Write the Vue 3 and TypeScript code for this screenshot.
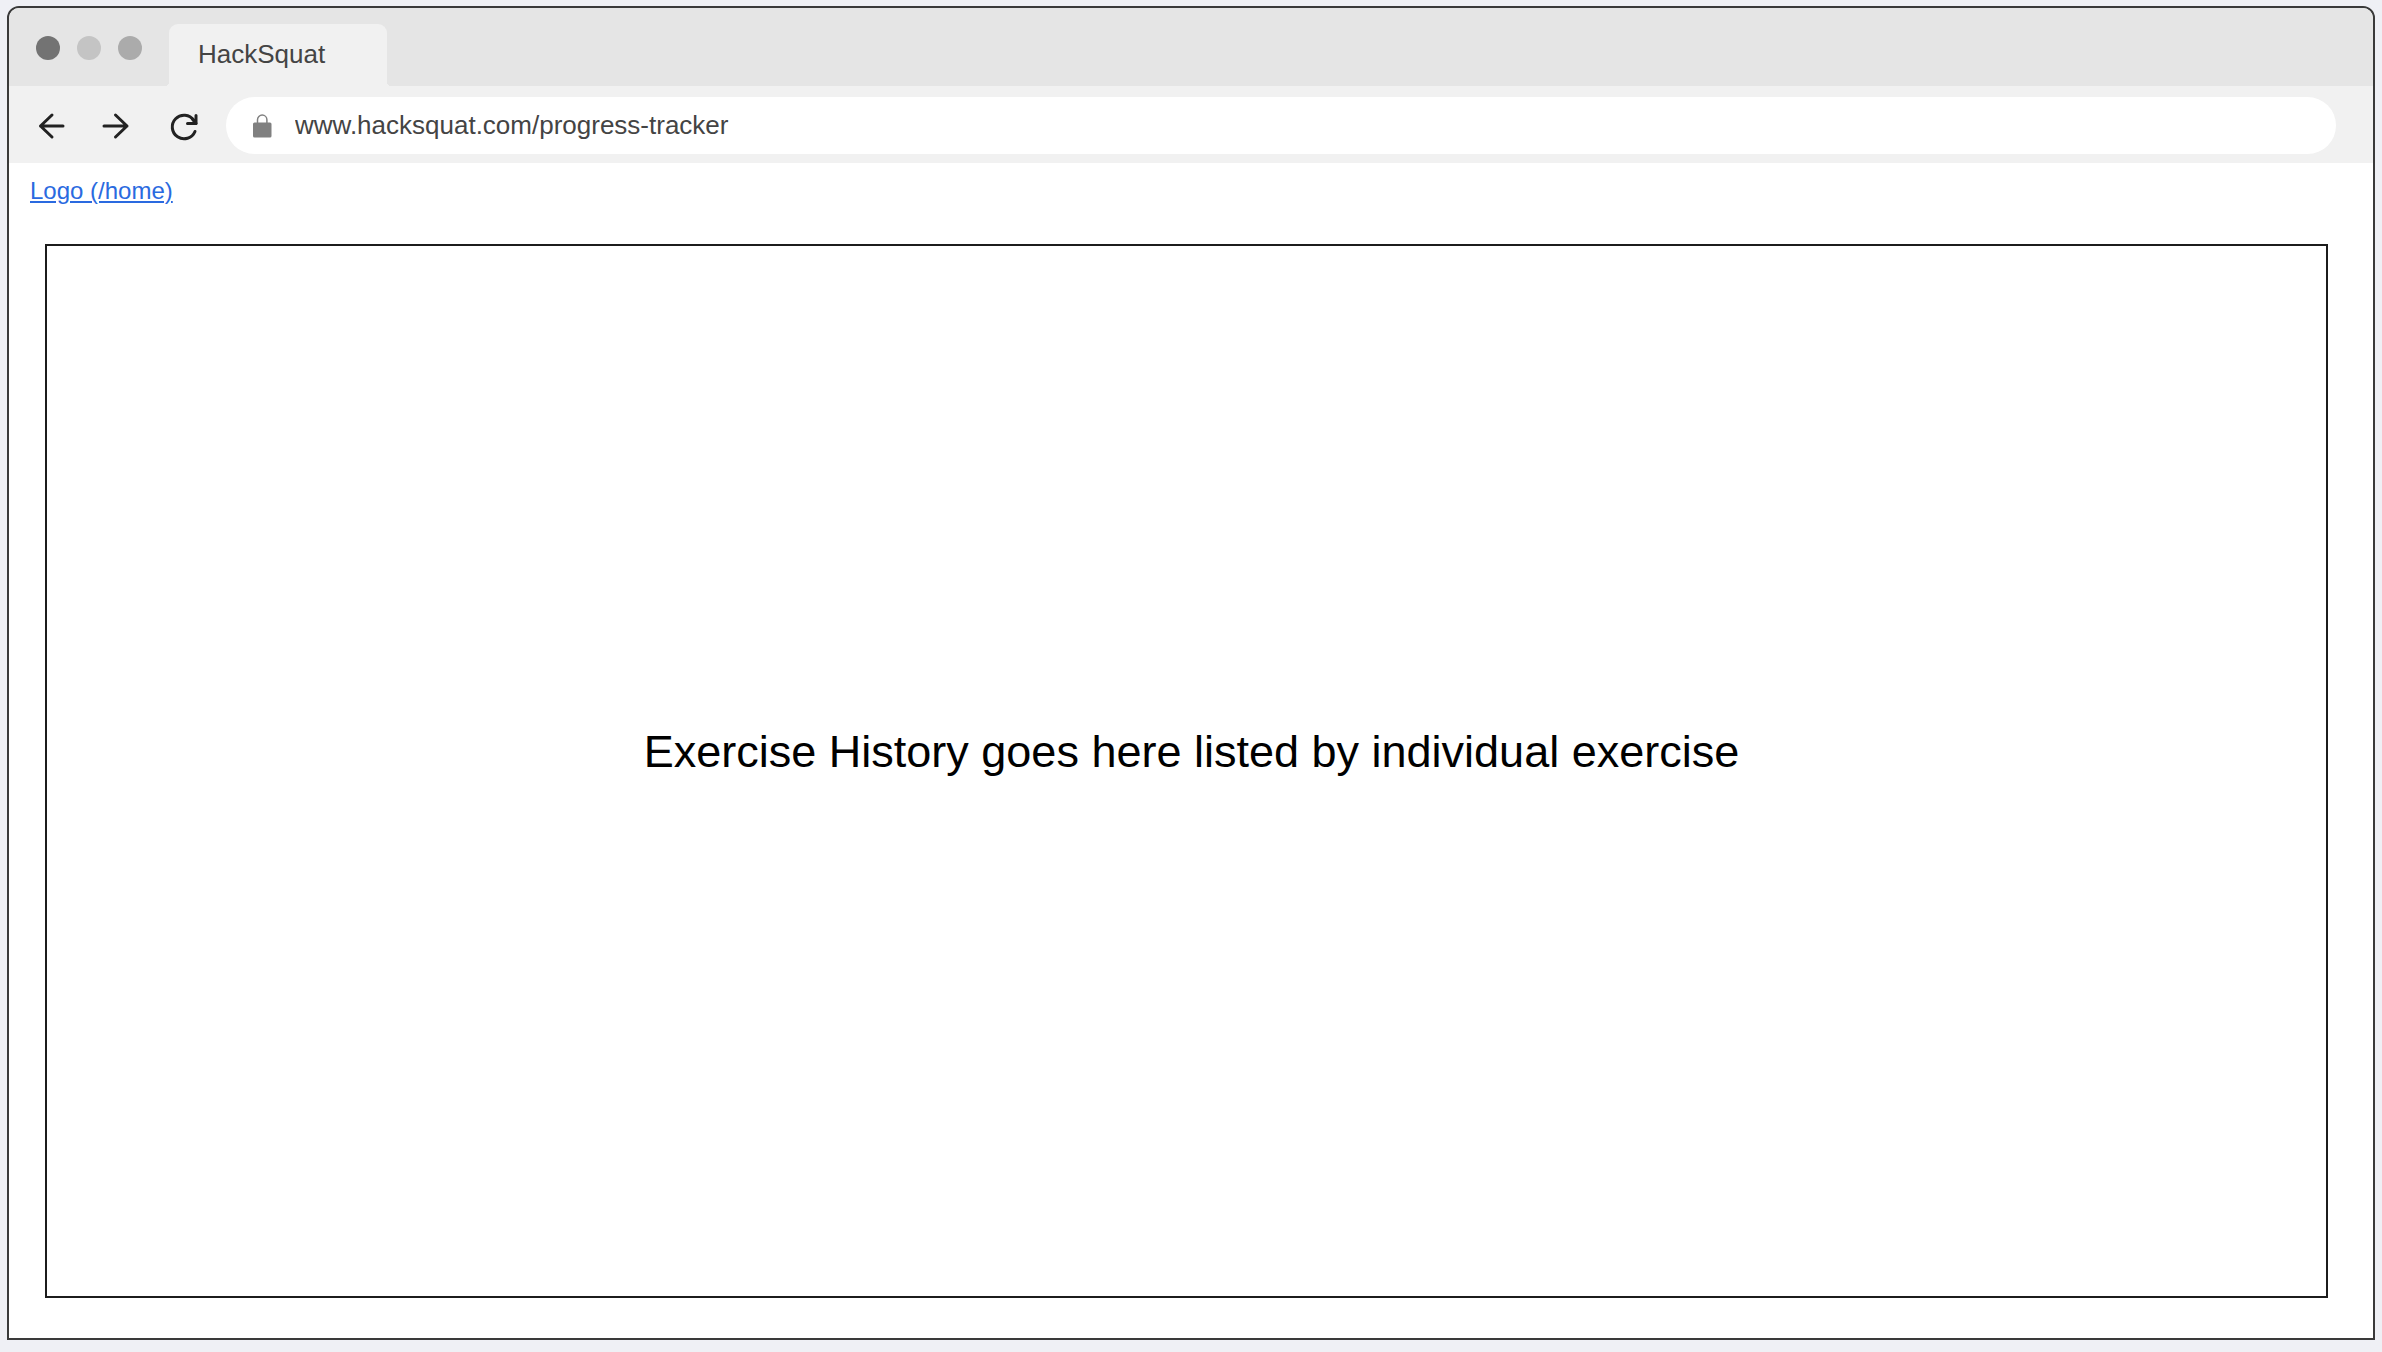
<script setup lang="ts">
import { ref } from 'vue'

const tabTitle = 'HackSquat'
const address = ref('www.hacksquat.com/progress-tracker')
</script>

<template>
  <div class="desktop">
    <div class="window">
      <header class="tab-strip">
        <div class="lights">
          <span class="light dark"></span>
          <span class="light pale"></span>
          <span class="light mid"></span>
        </div>
        <div class="tab">{{ tabTitle }}</div>
      </header>

      <nav class="toolbar">
        <button class="tool" type="button" aria-label="Back">
          <svg viewBox="0 0 32 32">
            <path d="M28 16H5.500M17 5L5.500 16L17 27" />
          </svg>
        </button>
        <button class="tool" type="button" aria-label="Forward">
          <svg viewBox="0 0 32 32">
            <path d="M4 16H27M15.500 5L27 16L15.500 27" />
          </svg>
        </button>
        <button class="tool reload" type="button" aria-label="Reload">
          <svg viewBox="0 0 32 32">
            <path d="M27 21.500A11.800 11.800 0 1 1 25.800 10.300" />
            <path d="M28 5.500V13.500H19.500" />
            <path d="M24.500 9L28 13.500" />
          </svg>
        </button>
        <label class="address">
          <svg class="lock" viewBox="0 0 20 24">
            <path d="M5.500 10V5.800A4.700 4.700 0 0 1 14.900 5.800V10" fill="none" stroke="#808080" stroke-width="1.500" />
            <rect x="1" y="8.500" width="18.500" height="15" rx="1.500" fill="#808080" />
          </svg>
          <input v-model="address" type="text" aria-label="Address" spellcheck="false" />
        </label>
      </nav>

      <main class="page">
        <a class="logo" href="/home">Logo (/home)</a>
        <section class="history">
          <p>Exercise History goes here listed by individual exercise</p>
        </section>
      </main>
    </div>
  </div>
</template>

<style>
body {
  margin: 0;
  background: #eff0f5;
}
</style>

<style scoped>
.desktop {
  box-sizing: border-box;
  display: flex;
  min-height: 100vh;
  padding: 6px 7px 12px;
  background: #eff0f5;
  font-family: "Liberation Sans", Arial, Helvetica, sans-serif;
}

.window {
  flex: 1;
  display: flex;
  flex-direction: column;
  min-width: 0;
  border: 2px solid #3a3a3a;
  border-radius: 12px 12px 0 0;
  background: #fff;
  overflow: hidden;
}

.tab-strip {
  display: flex;
  align-items: flex-end;
  height: 78px;
  background: #e5e5e5;
}

.lights {
  display: flex;
  gap: 17px;
  padding: 0 27px 26px;
}

.light {
  width: 24px;
  height: 24px;
  border-radius: 50%;
}

.dark {
  background: #737373;
}

.pale {
  background: #c4c4c4;
}

.mid {
  background: #ababab;
}

.tab {
  position: relative;
  box-sizing: border-box;
  width: 218px;
  height: 62px;
  padding-left: 29px;
  border-radius: 9px 9px 0 0;
  background: #f1f1f1;
  color: #444;
  font-size: 26px;
  line-height: 60px;
}

/* Flared feet where the tab meets the toolbar */
.tab::before,
.tab::after {
  content: "";
  position: absolute;
  bottom: 0;
  width: 4px;
  height: 4px;
}

.tab::before {
  right: 100%;
  background: radial-gradient(circle at 0 0, #e5e5e5 4px, #f1f1f1 4px);
}

.tab::after {
  left: 100%;
  background: radial-gradient(circle at 100% 0, #e5e5e5 4px, #f1f1f1 4px);
}

.toolbar {
  box-sizing: border-box;
  display: flex;
  align-items: center;
  gap: 33px;
  height: 77px;
  padding: 2px 37px 0 26px;
  background: #f1f1f1;
}

.tool {
  width: 32px;
  height: 32px;
  padding: 0;
  border: 0;
  background: none;
}

.tool svg {
  display: block;
  width: 32px;
  height: 32px;
  fill: none;
  stroke: #222;
  stroke-width: 3;
  stroke-linecap: round;
  stroke-linejoin: round;
}

.reload {
  margin-left: 3px;
}

.address {
  flex: 1;
  display: flex;
  align-items: center;
  gap: 23px;
  height: 57px;
  padding: 0 28px 0 26px;
  margin-left: -7px;
  border-radius: 29px;
  background: #fff;
}

.lock {
  flex: none;
  width: 20px;
  height: 24px;
}

.address input {
  flex: 1;
  min-width: 0;
  height: 40px;
  padding: 0;
  border: 0;
  outline: 0;
  background: none;
  color: #444;
  font-family: inherit;
  font-size: 26px;
}

.page {
  flex: 1;
  display: flex;
  flex-direction: column;
  align-items: flex-start;
  padding: 14px 45px 40px 21px;
}

.logo {
  color: #2a6ae0;
  font-size: 24px;
  line-height: 28px;
  text-decoration-thickness: 2px;
  text-underline-offset: 2px;
}

.history {
  box-sizing: border-box;
  flex: 1;
  align-self: stretch;
  display: flex;
  align-items: center;
  justify-content: center;
  margin: 39px 0 0 15px;
  padding: 0 0 38px 10px;
  border: 2px solid #1c1c1c;
}

.history p {
  margin: 0;
  color: #000;
  font-size: 45px;
  line-height: 52px;
}
</style>
